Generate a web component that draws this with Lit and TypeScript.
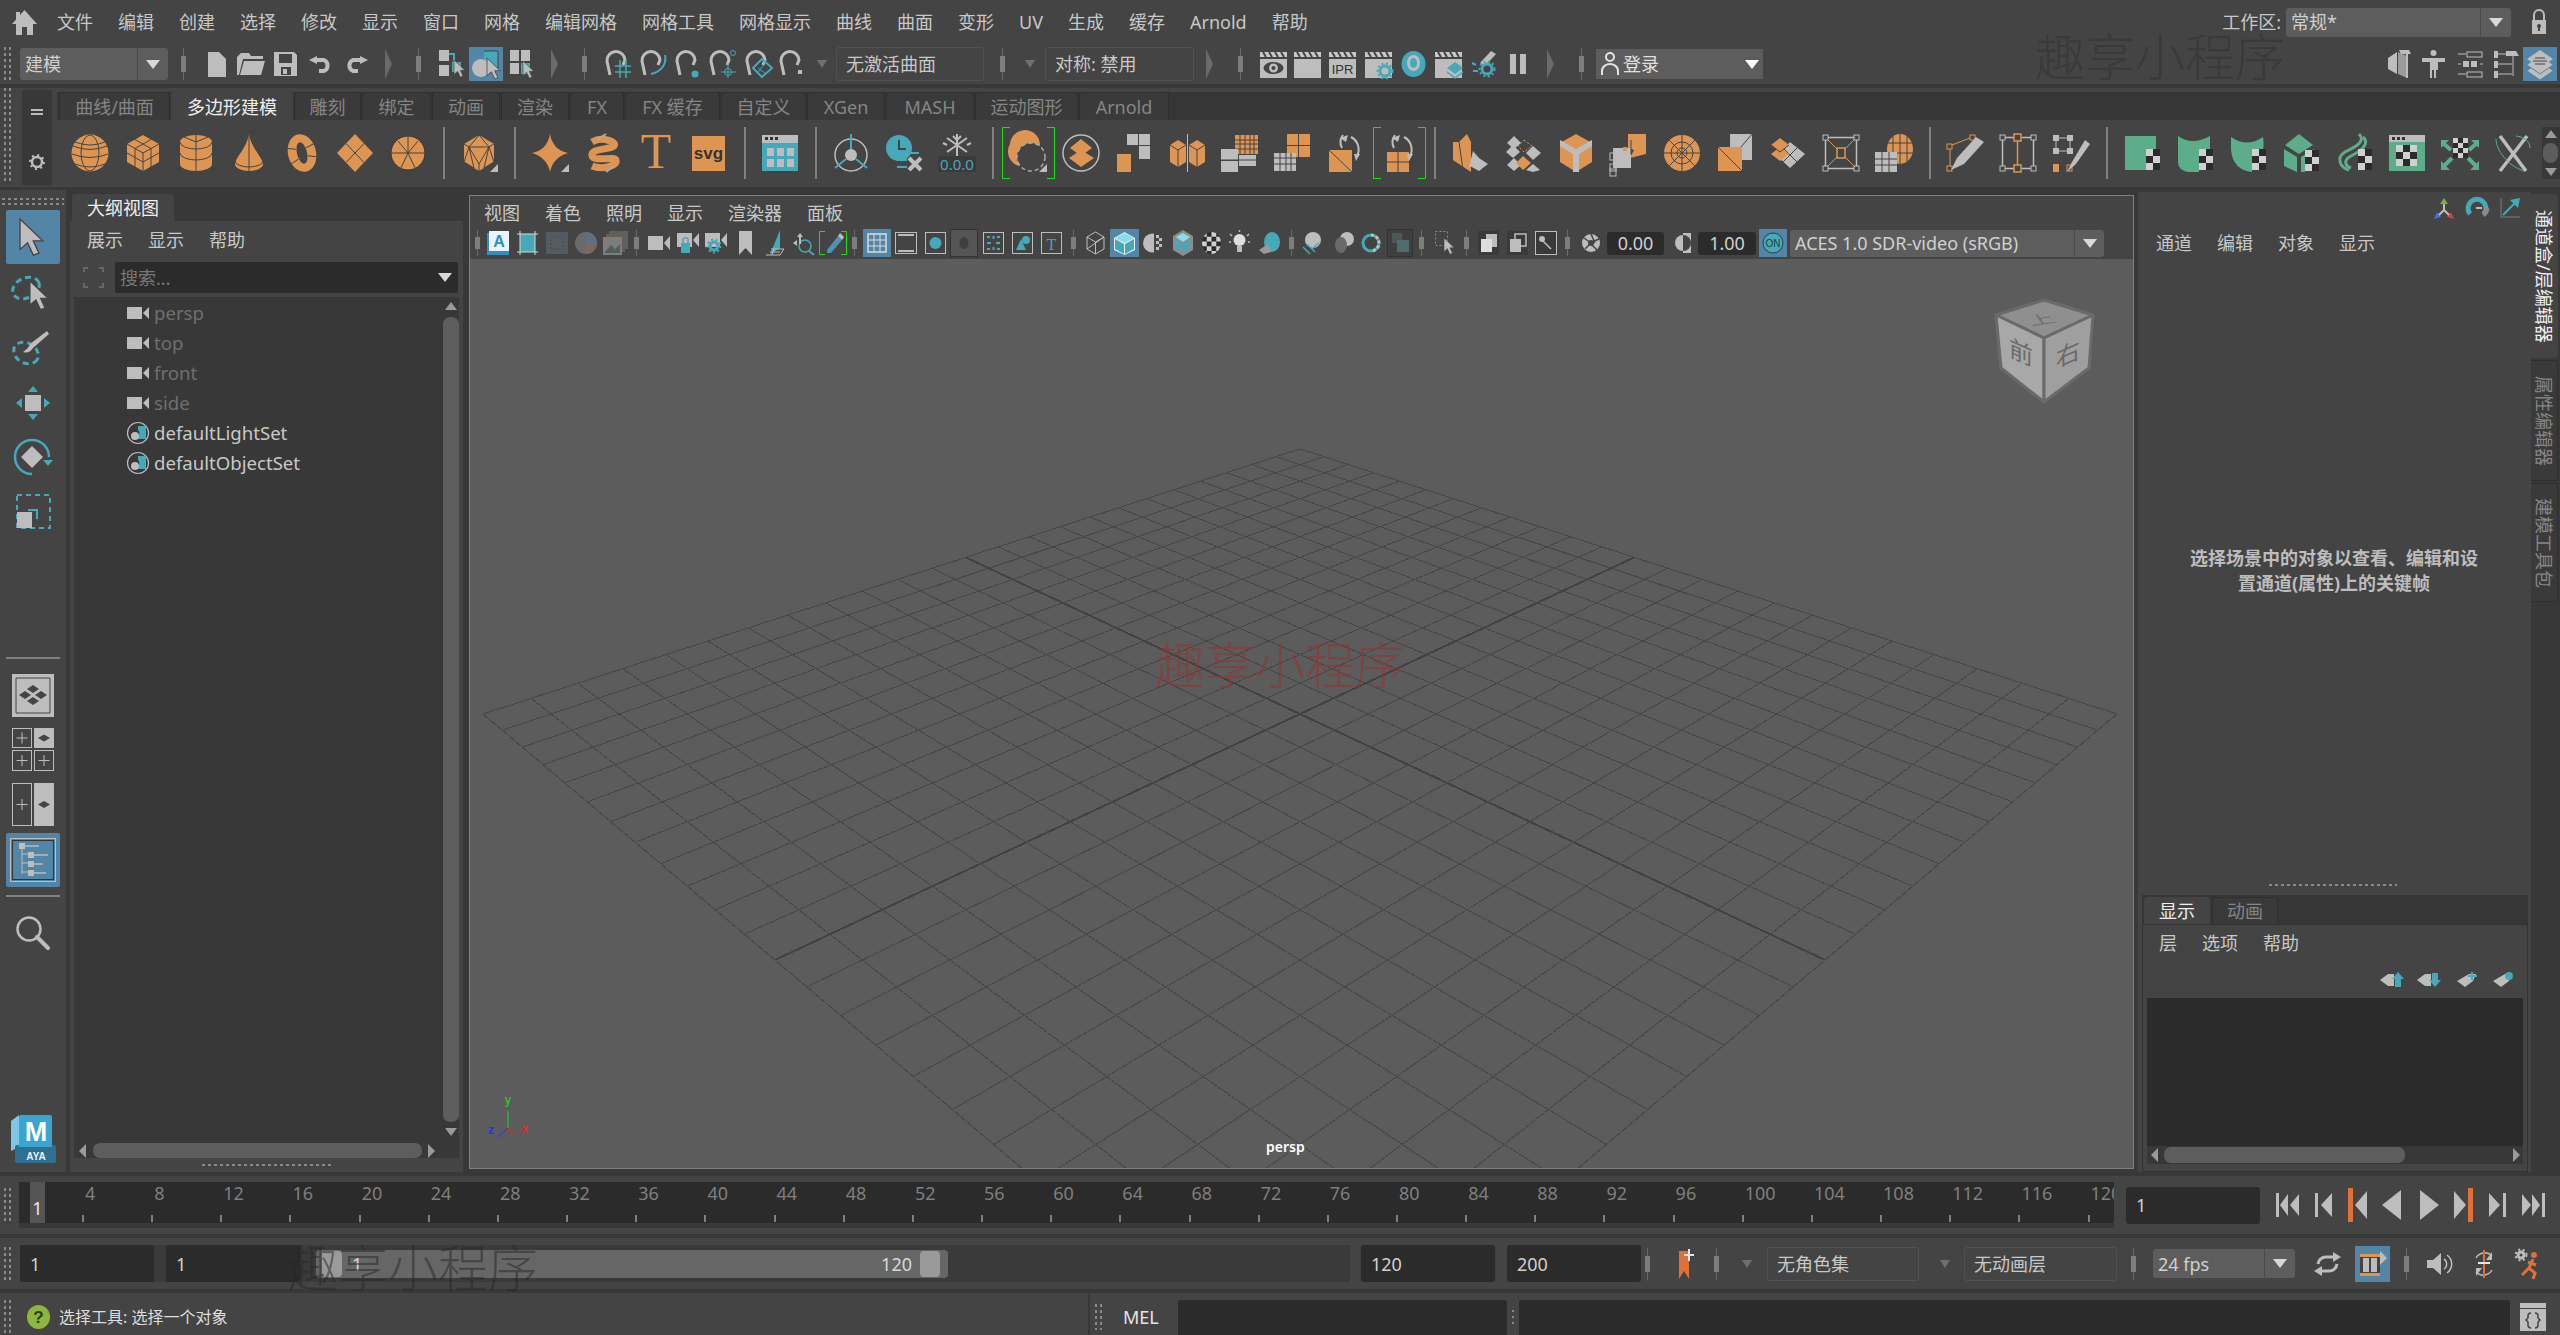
import { LitElement, css, html, svg } from "lit";
import { customElement } from "lit/decorators.js";

// palette sampled from the reference
const O = "#dd9553";
const G = "#bdbdbd";
const T = "#46a8b8";
const M = "#5dad8a";
const K = "#444444";
const B = "#5285a6";

type Item = { w: number; c: unknown };

const ic = (w: number, h: number, c: unknown): Item => ({
  w,
  c: html`<svg width=${w} height=${h} viewBox="0 0 ${w} ${h}">${c}</svg>`,
});
const ln = (d: string, col = K, sw = 1) => svg`<path d=${d} fill="none" stroke=${col} stroke-width=${sw}/>`;
const fl = (d: string, col = G) => svg`<path d=${d} fill=${col}/>`;
const rc = (x: number, y: number, w: number, h: number, col = G) =>
  svg`<rect x=${x} y=${y} width=${w} height=${h} fill=${col}/>`;
const cursor = (x: number, y: number, s = 1, col = G) =>
  svg`<path transform="translate(${x} ${y}) scale(${s})" d="M0 0V16L4 12.5L7 19L10 18L7 11.5H12Z" fill=${col} stroke=${K} stroke-width=".7"/>`;
const check = (x: number, y: number, c = 7, rows = 3, cols = 2) => {
  const out: unknown[] = [rc(x, y, c * cols, c * rows, "#2b2b2b")];
  for (let r = 0; r < rows; r++) for (let q = 0; q < cols; q++) if ((r + q) % 2 == 0) out.push(rc(x + q * c, y + r * c, c, c, "#d0d0d0"));
  return out;
};
const corner = svg`<path d="M30 38H38V30Z" fill=${G}/>`;
const box = (w: number, h: number, col = G, sw = 1) =>
  svg`<rect x=".5" y=".5" width=${w - 1} height=${h - 1} fill="none" stroke=${col} stroke-width=${sw}/>`;

function box2(x: number, y: number) {
  return svg`<rect x=${x} y=${y - 1} width="6" height="7" fill="none" stroke=${G}/>`;
}

// ---- shelf icons, 38x38
const shelf: Record<string, unknown> = {
  sphere: svg`<circle cx="19" cy="19" r="18.5" fill=${O}/><ellipse cx="19" cy="19" rx="9" ry="18" fill="none" stroke=${K}/>${ln("M2 12Q19 19 36 12M1 20Q19 27 37 20M4 30Q19 36 34 30M4 8Q19 14 34 8")}`,
  cube: svg`${fl("M19 1L35 10V28L19 37L3 28V10Z", O)}${ln("M3 10L19 19L35 10M19 19V37M11 5.5L27 14.5M27 5.5L11 14.5M11 14.5V33M27 14.5V33M3 19L19 28L35 19")}`,
  cyl: svg`${fl("M3 8A16 7 0 0 1 35 8V30A16 7 0 0 1 3 30Z", O)}${ln("M3 8A16 7 0 0 0 35 8M3 19A16 7 0 0 0 35 19M19 15V37M19 1V15M7 3L19 8L31 3")}`,
  cone: svg`${fl("M19 0C21 14 33 24 33 30A14 7 0 0 1 5 30C5 24 17 14 19 0Z", O)}${ln("M19 0V37M5 27A14 6 0 0 0 33 27")}`,
  torus: svg`<g transform="rotate(-14 19 19)"><ellipse cx="19" cy="19" rx="14" ry="19" fill=${O}/><ellipse cx="19" cy="19" rx="5" ry="11" fill=${K}/>${ln("M6 11L14 14M32 13L24 15M6 27L14 24M32 26L24 23")}</g>`,
  plane: svg`${fl("M19 0L37 19L19 38L1 19Z", O)}${ln("M10 9.5L28 28.5M28 9.5L10 28.5")}`,
  disc: svg`<circle cx="19" cy="19" r="17" fill=${O} stroke="#333"/>${ln("M2 19H36M19 2V19M9 7L19 19L29 7M19 19L12 34M19 19L26 34")}`,
  plat: svg`${fl("M19 1L34 10V28L19 37L4 28V10Z", O)}${ln("M19 1L9 13L29 13ZM4 10L9 13L4 28L14 34L9 13L19 30L29 13L24 34L34 28L29 13L34 10M19 30V37")}${corner}`,
  star: svg`${fl("M19 0C21 11 27 17 37 19C27 22 21 28 19 38C17 28 11 22 1 19C11 17 17 11 19 0Z", O)}${corner}`,
  helix: svg`${ln("M8 8C18 2 34 8 30 12C26 16 6 14 8 22C10 28 30 22 32 26C34 32 18 36 8 32", O, 7)}${ln("M22 0L14 5M30 32L22 38", "#aaa", 2)}`,
  T: svg`<text x="19" y="34" text-anchor="middle" font-size="50" font-family="Liberation Serif" fill=${O}>T</text>`,
  svg: svg`<rect x="2" y="2" width="33" height="35" fill=${O}/><text x="18.5" y="25" text-anchor="middle" font-size="17" font-weight="bold" font-family="Liberation Sans" fill="#333">svg</text>`,
  win: svg`${rc(1, 1, 36, 36, T)}${rc(1, 1, 36, 8, G)}${rc(4, 3, 3, 3, "#333")}${rc(9, 3, 3, 3, "#333")}${rc(14, 3, 3, 3, "#333")}${[6, 16, 26].map((x) => [rc(x, 14, 7, 8), rc(x, 25, 7, 8)])}`,
  loc: svg`<circle cx="19" cy="21" r="16" fill="none" stroke=${G} stroke-width="1.5"/><circle cx="19" cy="21" r="6" fill=${G}/>${ln("M19 0V15M14 25L3 34M24 25L35 34", T, 2)}`,
  clock: svg`<circle cx="14" cy="14" r="13" fill=${T}/>${ln("M14 6V15H21", K, 2)}${ln("M16 19H34M12 26H22M12 33H22", T, 2)}${ln("M24 24L36 36M36 24L24 36", G, 4)}`,
  snow: svg`${rc(0, 22, 38, 16, "#3a3a3a")}${ln("M19 0V22M9 4L29 18M29 4L9 18M15 2L19 6L23 2M5 9L9 11M33 9L29 11", G, 2)}<text x="19" y="36" text-anchor="middle" font-size="15" font-family="Noto Sans" fill=${T}>0.0.0</text>`,
  bool: svg`<path d="M1 10A15 15 0 1 1 28 20L10 32A15 15 0 0 1 1 10Z" fill=${O}/><circle cx="22" cy="23" r="14" fill=${K} stroke="#aaa" stroke-width="1.5" stroke-dasharray="4 3"/>${corner}`,
  combine: svg`<circle cx="19" cy="19" r="18" fill="none" stroke=${G} stroke-width="1.5"/>${fl("M19 5L30 14L19 22L8 14Z", O)}${fl("M19 16L32 24L19 33L7 24Z", O)}`,
  sepa: svg`${rc(12, 0, 11, 11)}${rc(24, 0, 11, 11)}${rc(24, 12, 11, 13)}${rc(2, 20, 14, 18, O)}`,
  mirror: svg`${fl("M10 6L18 11V28L10 33L2 28V11Z", O)}${ln("M2 11L10 16L18 11M10 16V33")}${fl("M29 6L37 11V28L29 33L21 28V11Z", O)}${ln("M21 11L29 16L37 11M29 16V33")}${ln("M19.5 0V38", G, 1)}`,
  smooth: svg`${rc(14, 1, 23, 19, O)}${ln("M14 6H37M14 10H37M14 15H37M19 1V20M24 1V20M29 1V20M33 1V20")}${rc(0, 15, 17, 11)}${rc(18, 21, 17, 11)}${rc(0, 27, 17, 11)}${ln("M0 26H35")}`,
  reduce: svg`${rc(13, 0, 23, 23, O)}${ln("M13 11.5H36M24.5 0V23")}${rc(0, 19, 22, 18)}${ln("M0 24H22M0 30H22M6 19V37M12 19V37M17 19V37")}`,
  tri: svg`${fl("M2 16H25V38H2Z", O)}${ln("M2 16L25 38")}${ln("M15 14A12 12 0 0 1 16 1M24 3A14 14 0 0 1 30 22", G, 2)}${fl("M13 4L21 1L19 8Z")}${fl("M27 20L33 20L29 27Z")}`,
  quad: svg`${rc(7, 18, 22, 20, O)}${ln("M7 28H29M18 18V38")}${ln("M14 14A12 12 0 0 1 15 1M24 3A14 14 0 0 1 30 22", G, 2)}${fl("M12 4L20 1L18 8Z")}${fl("M27 20L33 20L29 27Z")}`,
  ext: svg`${fl("M8 8L16 0L20 8V38L2 26V8Z", O)}${ln("M8 8L12 36")}${fl("M22 17L28 24L18 33Z M28 24L37 30L28 37L19 32Z")}`,
  mesh: svg`${fl("M10 2L17 9L10 15L3 9Z")}${fl("M2 18L9 11L16 18L9 24Z")}${fl("M29 12L37 19L29 26L22 19Z")}${fl("M10 24L17 31L10 37L3 31Z")}${fl("M29 30L36 36L29 38L22 36Z")}${fl("M19 22L27 29L19 36L12 29Z", O)}<path d="M20 6L28 12L20 18L14 12Z" fill="none" stroke=${O} stroke-dasharray="2 2"/>`,
  bevel: svg`${fl("M19 0L35 9V28L19 38L3 28V9Z", O)}${fl("M19 15L35 6V12L22 20V38H16V20L3 12V6Z")}`,
  bridge: svg`${fl("M18 0H36V20L20 24L24 16L18 14Z", O)}${rc(3, 14, 18, 20)}${ln("M21 6V20")}${rc(13, 13, 4, 4, O)}${[[0, 20], [0, 31], [0, 36]].map(([x, y]) => box2(x, y))}`,
  circ: svg`<circle cx="19" cy="19" r="18" fill=${O}/>${ln("M1 19H37M19 1V37M6 6L32 32M32 6L6 32")}<circle cx="19" cy="19" r="11" fill="none" stroke=${K}/><circle cx="19" cy="19" r="5" fill="none" stroke=${K}/>`,
  extr2: svg`${fl("M14 0H36V26H14Z")}${ln("M14 26L36 0", K)}${rc(2, 13, 24, 24, O)}${ln("M2 13L26 37")}`,
  wedge: svg`${fl("M21 8L36 20L21 34L8 22Z")}${ln("M14 28L28 14M14 14L28 28")}${fl("M11 4L20 11L11 18L2 11Z", O)}${fl("M11 13L20 20L11 27L2 20Z", O)}${ln("M2 11L11 18L20 11")}`,
  poke: svg`${[[1, 1], [32, 1], [1, 32], [32, 32]].map(([x, y]) => svg`<rect x=${x} y=${y} width="5" height="5" fill="none" stroke=${G}/>`)}${ln("M6 3.5H32M6 34.5H32M3.5 6V32M34.5 6V32", G, 1.5)}${ln("M6 6L15 15M32 6L23 15M6 32L15 23M32 32L23 23", O)}<rect x="15" y="14" width="8" height="10" fill="none" stroke=${O} stroke-width="1.5"/>`,
  wedg2: svg`<ellipse cx="25" cy="15" rx="13" ry="15" fill=${O}/>${ln("M12 9H38M12 19H38M25 0V30M18 2V28M32 2V28")}${rc(0, 18, 22, 20)}${ln("M0 25H22M0 31H22M7 18V38M14 18V38")}`,
  cut: svg`<rect x="1" y="32" width="5" height="5" fill="none" stroke=${O}/><rect x="1" y="10" width="5" height="5" fill="none" stroke=${O}/><rect x="24" y="1" width="5" height="5" fill="none" stroke=${O}/>${ln("M4 32V15M6 11L24 4", O)}${fl("M5 36L11 24L30 3L38 8L18 30Z")}`,
  loop: svg`${[1, 32].flatMap((x) => [1, 32].map((y) => svg`<rect x=${x} y=${y} width="5" height="5" fill="none" stroke=${G}/>`))}${ln("M3.5 6V32M34.5 6V32", G, 1.5)}${ln("M6 3.5H15M23 3.5H32M6 34.5H15M23 34.5H32", G, 1.5)}<rect x="15" y="0" width="7" height="7" fill="none" stroke=${O} stroke-width="1.5"/><rect x="15" y="31" width="7" height="7" fill="none" stroke=${O} stroke-width="1.5"/>${ln("M18.5 7V31", O, 1.5)}`,
  offs: svg`${rc(1, 1, 6, 6)}${rc(15, 1, 6, 6)}${rc(1, 14, 6, 6)}${rc(15, 14, 6, 6)}${ln("M7 4H15M7 17H15M4 7V14M18 7V14", G)}${rc(1, 30, 6, 8, O)}<rect x="15" y="31" width="5" height="6" fill="none" stroke=${O}/>${fl("M15 38L20 28L33 6L38 10L24 30Z")}`,
  uv1: svg`${rc(2, 2, 31, 34, M)}${check(23, 15)}`,
  uv2: svg`${fl("M2 2Q16 12 34 2V24H23V38H12Q2 36 2 28Z", M)}${check(23, 15)}`,
  uv3: svg`${fl("M2 3Q18 14 34 3Q36 14 32 20H23V38Q4 36 2 16Z", M)}${check(23, 15)}`,
  uv4: svg`${fl("M17 0L31 11L17 20L3 11Z", M)}${fl("M2 15L15 23V38L2 32Z", M)}${fl("M19 23L32 15V22H23V38H19Z", M)}${check(23, 16)}`,
  uv5: svg`${ln("M24 0C32 8 18 14 10 18C0 24 6 34 14 36", M, 3)}${ln("M28 3C36 10 24 18 16 22C8 26 10 32 16 34", M, 3)}${check(23, 15)}`,
  uv6: svg`${rc(1, 1, 36, 36, M)}${rc(1, 1, 36, 7, G)}${rc(4, 3, 3, 3, "#333")}${rc(9, 3, 3, 3, "#333")}${rc(14, 3, 3, 3, "#333")}${check(8, 11, 7, 3, 3)}`,
  uv7: svg`${check(12, 4, 5, 4, 3)}${ln("M10 16L3 10M28 16L35 10M11 24L3 32M27 24L35 32", M, 4)}${fl("M0 6H8L0 14Z M38 6H30L38 14Z M0 36V27L9 36Z M38 36V27L29 36Z", M)}`,
  uv8: svg`${ln("M6 2L32 37", G, 3.5)}${ln("M33 2L6 37", G, 3.5)}${ln("M2 5C2 16 14 32 30 37M22 2C30 3 36 7 36 14", M)}`,
};

// "|" is a separator between groups, "[" marks an icon with the green bracket
const SHELF: string[] = [
  "sphere", "cube", "cyl", "cone", "torus", "plane", "disc", "|", "plat", "|", "star", "helix", "T", "svg", "|", "win", "|",
  "loc", "clock", "snow", "|", "[bool", "combine", "sepa", "mirror", "smooth", "reduce", "tri", "[quad", "|",
  "ext", "mesh", "bevel", "bridge", "circ", "extr2", "wedge", "poke", "wedg2", "|", "cut", "loop", "offs", "|",
  "uv1", "uv2", "uv3", "uv4", "uv5", "uv6", "uv7", "uv8",
];

// ---- small toolbar icons, real pixel sizes
const handle = ic(5, 32, svg`${rc(2, 0, 1, 32, "#6a6a6a")}${rc(0, 8, 5, 16, "#7d7d7d")}`);
const handleS = ic(5, 26, svg`${rc(2, 0, 1, 26, "#6a6a6a")}${rc(0, 7, 5, 12, "#7d7d7d")}`);
const collapse = ic(7, 30, svg`${fl("M0 0L7 15L0 30Z", "#6a6a6a")}`);
const tinyTri = ic(10, 8, svg`${fl("M0 0H10L5 8Z", "#6f6f6f")}`);

const mag = (extra: unknown) =>
  ic(28, 28, svg`${ln("M5 25L2 11A9 9 0 0 1 20 10L18 15", G, 3)}${extra}`);

const clap = (extra: unknown) =>
  ic(27, 27, svg`${rc(0, 8, 27, 19)}${rc(0, 1, 27, 5, "#c8c8c8")}${ln("M3 1L6 6M9 1L12 6M15 1L18 6M21 1L24 6", K, 2)}${extra}`);
const gear = (x: number, y: number, r = 5, col = T) =>
  svg`<circle cx=${x} cy=${y} r=${r} fill="none" stroke=${col} stroke-width="3"/><circle cx=${x} cy=${y} r=${r + 2.5} fill="none" stroke=${col} stroke-width="2" stroke-dasharray="2 2.5"/>`;

const mini: Record<string, Item> = {
  new: ic(18, 25, fl("M0 0H11L18 7V25H0Z")),
  open: ic(28, 22, svg`${fl("M4 0H12L14 3H26V6H6L2 22H0V4Z")}${fl("M7 8H28L24 22H3Z")}`),
  save: ic(23, 24, svg`${fl("M0 0H20L23 3V24H0Z")}${rc(5, 2, 13, 9, K)}${rc(7, 15, 10, 8, K)}${rc(9, 17, 4, 5)}`),
  undo: ic(24, 16, svg`${ln("M5 4H15A6 6 0 0 1 15 15H10", G, 4)}${fl("M8 0V8L0 4Z")}`),
  redo: ic(24, 16, svg`${ln("M19 4H9A6 6 0 0 0 9 15H14", G, 4)}${fl("M16 0V8L24 4Z")}`),
  m1: ic(27, 28, svg`${rc(0, 0, 10, 11)}${rc(0, 15, 10, 11)}${ln("M10 4H15V13", T, 2)}${rc(13, 12, 9, 10, T)}${cursor(15, 10, 0.9)}`),
  m2: ic(34, 34, svg`${rc(0, 0, 34, 34, B)}${rc(15, 4, 14, 16, T)}${ln("M15 4H29V22", K)}<circle cx="12" cy="21" r="9" fill=${G}/>${cursor(18, 11, 1.1)}`),
  m3: ic(24, 28, svg`${rc(0, 0, 9, 11)}${rc(11, 0, 9, 11)}${rc(0, 13, 9, 11)}${rc(11, 13, 9, 11, T)}${cursor(13, 11, 0.9)}`),
  s1: mag(ln("M10 16H26M10 22H26M15 10V28M21 10V28", T, 1.5)),
  s2: mag(ln("M25 5C27 14 21 22 11 24", T, 2)),
  s3: mag(svg`<circle cx="20" cy="24" r="3.5" fill=${T}/>`),
  s4: mag(svg`<circle cx="24" cy="3" r="2.5" fill="none" stroke=${T}/><circle cx="19" cy="22" r="3.5" fill="none" stroke=${T}/>${ln("M19 13V28M12 22H27", T)}`),
  s5: mag(svg`<path d="M17 9L27 18L17 27L8 18Z" fill="none" stroke=${T} stroke-width="2"/>${ln("M13 18L21 24M21 12L13 22", T)}`),
  s6: mag(rc(19, 20, 4, 4)),
  c1: clap(svg`<ellipse cx="13.5" cy="17" rx="10" ry="6" fill=${K}/><circle cx="13.5" cy="17" r="4.5" fill=${G}/><circle cx="13.5" cy="17" r="2" fill=${K}/>`),
  c2: clap(""),
  c3: clap(svg`<text x="13.5" y="23" text-anchor="middle" font-size="13" font-family="Liberation Sans" fill="#333">IPR</text>`),
  c4: clap(gear(20, 20)),
  c5: clap(svg`${fl("M20 11L28 17L20 23L12 17Z", T)}${fl("M12 20L20 26L28 20V22L20 28L12 22Z", T)}`),
  ring: ic(25, 26, svg`<ellipse cx="12.5" cy="13" rx="12" ry="13" fill=${T}/><ellipse cx="12.5" cy="12" rx="6.5" ry="8" fill=${G}/><ellipse cx="12.5" cy="12" rx="3.5" ry="5" fill=${T}/>`),
  rs: ic(26, 27, svg`${fl("M9 12L20 0L25 3L14 15Z")}${ln("M1 12L5 14M2 20H7", T, 2)}${gear(16, 18, 5)}`),
  pause: ic(16, 20, svg`${rc(0, 0, 6, 20)}${rc(10, 0, 6, 20)}`),
  r1: ic(24, 28, svg`${fl("M1 8L10 2V24L1 19Z")}${fl("M11 2L20 6V28L11 24Z", "#9a9a9a")}${fl("M12 0H22L24 4H14Z")}${rc(19, 4, 2, 24)}`),
  r2: ic(23, 28, svg`<circle cx="11.5" cy="3" r="3" fill=${G}/>${fl("M0 8H23V12H16V20H14V28H12V20H10V28H8V12H0Z")}`),
  r3: ic(25, 26, svg`${ln("M0 3H8M0 13H3M0 23H8M22 13H25", G)}<rect x="9" y="1" width="15" height="5" fill="none" stroke=${G}/><rect x="9" y="21" width="15" height="5" fill="none" stroke=${G}/>${rc(5, 10, 6, 6)}${rc(13, 10, 6, 6)}`),
  r4: ic(25, 26, svg`${rc(0, 0, 4, 7)}${rc(0, 10, 4, 7)}${rc(0, 20, 4, 7)}${ln("M4 3H18M4 13H18M4 23H18M19 5V25", G)}${fl("M12 0H22L25 5H12Z")}`),
  r5: ic(34, 34, svg`${rc(0, 0, 34, 34, B)}${[21, 15, 9].map((y) => fl(`M17 ${y - 6}L30 ${y + 3}L17 ${y + 12}L4 ${y + 3}Z`))}${[21, 15].map((y) => ln(`M4 ${y + 3}L17 ${y + 12}L30 ${y + 3}`, B))}${ln("M12 11H22M10 14H24M12 17H22", K)}`),
  person: ic(18, 24, svg`<circle cx="9" cy="5" r="4" fill="none" stroke="#e4e4e4" stroke-width="2"/>${ln("M1 23V19C1 14 6 12 9 12C12 12 17 14 17 19V23", "#e4e4e4", 2)}`),

  pA: ic(23, 24, svg`${rc(0, 2, 22, 22, "#2f8fc1")}${rc(2, 0, 20, 20, "#eaf4fa")}<text x="12" y="16" text-anchor="middle" font-size="16" font-weight="bold" font-family="Liberation Sans" fill="#2f8fc1">A</text>`),
  pB: ic(21, 24, svg`${rc(3, 3, 15, 18, T)}${ln("M0 3H21M0 21H21M3 0V24M18 0V24", "#d8d8d8")}`),
  pC: ic(22, 22, svg`${rc(0, 0, 22, 22, "#555b63")}<rect x="5" y="5" width="12" height="12" fill="none" stroke="#4a4f55" stroke-dasharray="2 2"/>`),
  pD: ic(22, 22, svg`<circle cx="11" cy="11" r="11" fill="#6a6a6a"/><path d="M11 0A11 11 0 0 1 22 11H11Z" fill="#5d7080"/><path d="M11 11H22A11 11 0 0 1 11 22Z" fill="#7a6868"/>`),
  pE: ic(25, 24, svg`${rc(6, 0, 19, 18, "#4d6a5a")}${rc(3, 3, 19, 18, "#6a5a5a")}${rc(0, 6, 19, 18, "#7d7d7d")}${fl("M2 21L8 14L12 18L17 13V22H2Z", "#4f5f5f")}`),
  cam: ic(22, 14, svg`${rc(0, 0, 15, 14)}${fl("M22 0V14L16 7Z")}`),
  lockcam: ic(22, 24, svg`${rc(0, 2, 15, 14)}${fl("M22 2V16L16 9Z")}${rc(4, 12, 9, 10, T)}${ln("M6 12V8A3 3 0 0 1 11 8V12", T, 1.5)}`),
  gearcam: ic(22, 24, svg`${rc(0, 2, 15, 14)}${fl("M22 2V16L16 9Z")}${gear(9, 15, 4)}`),
  mark: ic(13, 24, fl("M0 0H13V24L6.5 17L0 24Z")),
  plane2: ic(20, 26, svg`${fl("M10 10L14 0V18L4 24Z", T)}${ln("M0 25H14L18 19H5", G)}${ln("M4 22H14M8 19L6 25", G)}`),
  focus: ic(21, 24, svg`<circle cx="12" cy="15" r="6" fill="none" stroke=${T} stroke-width="1.5"/>${ln("M16 20L21 24", T, 2)}${fl("M7 2L4 6H6V13H8V6H10Z")}${fl("M0 12L4 9V15Z")}`),
  pen: ic(28, 24, svg`${ln("M6 .5H.5V23.5H6M22 .5H27.5V23.5H22", "#18e018")}${fl("M8 19L19 5L23 9L12 22L8 22Z", "#4f93b0")}${fl("M19 5L21 2L25 6L23 9Z", G)}`),
  grid1: ic(28, 28, svg`${rc(0, 0, 28, 28, B)}<rect x="5" y="5" width="18" height="18" fill="none" stroke="#ddd" stroke-width="1.5"/>${ln("M5 11H23M5 17H23M11 5V23M17 5V23", "#ddd")}`),
  film: ic(22, 22, svg`${box(22, 22, G, 1)}${rc(3, 4, 16, 14, K)}${ln("M3 3H19M3 19H19", G, 2)}`),
  res: ic(21, 22, svg`${box(21, 22, G)}<circle cx="10.5" cy="11" r="6" fill=${T}/>`),
  dk: ic(28, 28, svg`${rc(0, 0, 28, 28, "#555")}${box(28, 28, "#333")}<ellipse cx="14" cy="14" rx="4.5" ry="6" fill="#3f3f3f"/>`),
  safe: ic(21, 22, svg`${box(21, 22, G)}${ln("M4 11H8M13 11H17M10.5 4V7M10.5 15V18", T, 2)}${ln("M4 5H7M14 5H17M4 17H7M14 17H17", T, 2)}`),
  gate: ic(21, 22, svg`${box(21, 22, G)}${fl("M4 18L9 7L14 18Z", T)}<circle cx="14" cy="8" r="4" fill=${T}/>`),
  txt: ic(21, 22, svg`${box(21, 22, G)}<text x="10.5" y="18" text-anchor="middle" font-size="16" font-family="Liberation Serif" fill=${T}>T</text>`),
  wire: ic(19, 24, svg`${ln("M9.5 1L18 6V18L9.5 23L1 18V6ZM1 6L9.5 11L18 6M9.5 11V23M1 18L18 6", G)}`),
  shaded: ic(29, 28, svg`${rc(0, 0, 29, 28, B)}${fl("M14.5 3L25 9V21L14.5 26L4 21V9Z", "#eee")}${fl("M14.5 4L24 9L14.5 14L5 9Z", "#8adce8")}${fl("M5 10L14 15V25L5 20Z", T)}${fl("M24 10L15 15V25L24 20Z", T)}`),
  half: ic(19, 22, svg`<circle cx="9.5" cy="11" r="9.5" fill=${G}/><path d="M11 1A10 10 0 0 1 11 21Z" fill=${K}/>${[3, 9, 15].map((y) => rc(13, y, 3, 3))}${[6, 12].map((y) => rc(16, y, 3, 3))}`),
  hexa: ic(20, 26, svg`${fl("M10 0L20 6V20L10 26L0 20V6Z", "#8d8d8d")}${fl("M10 3L17 7L10 12L3 7Z", "#8adce8")}${fl("M3 9L9 13V22L3 19Z", T)}${fl("M17 9L11 13V22L17 19Z", T)}`),
  checkb: ic(19, 22, svg`<clipPath id="cc"><ellipse cx="9.5" cy="11" rx="9.5" ry="11"/></clipPath><g clip-path="url(#cc)">${check(0, 0, 4.75, 5, 4)}</g>`),
  bulb: ic(21, 26, svg`<circle cx="10.5" cy="10" r="6" fill="#dedede"/>${rc(8, 16, 5, 6)}${ln("M10.5 0V2M1 4L3 6M20 4L18 6M0 12H2M19 12H21", G, 1.5)}`),
  shad: ic(21, 22, svg`<ellipse cx="13" cy="10" rx="8" ry="10" fill=${T}/>${fl("M0 18L9 12L12 20L5 22Z", "#999")}`),
  ao: ic(20, 24, svg`<circle cx="11" cy="9" r="8" fill=${G}/>${ln("M1 16L8 23M5 13L13 21M10 18L17 12", T, 1.5)}`),
  ghost: ic(20, 24, svg`<circle cx="13" cy="8" r="7" fill=${G}/><ellipse cx="7" cy="14" rx="6" ry="8" fill="#6a6a6a"/>`),
  circT: ic(18, 22, svg`<circle cx="9" cy="11" r="8" fill="none" stroke=${T} stroke-width="3"/><path d="M9 3A8 8 0 0 1 9 19" fill="none" stroke=${G} stroke-width="3" stroke-dasharray="3 2"/>`),
  dk2: ic(26, 28, svg`${rc(0, 0, 26, 28, "#3f3f3f")}${box(26, 28, "#333")}${rc(5, 4, 10, 10, "#4c5757")}${rc(10, 11, 12, 12, "#4f6a70")}`),
  sel: ic(20, 24, svg`<rect x=".5" y=".5" width="12" height="14" fill="none" stroke=${T} stroke-dasharray="2 2"/>${cursor(9, 7, 0.85)}`),
  xr1: ic(21, 24, svg`${rc(0, 0, 21, 24, "#3a3a3a")}${rc(8, 3, 11, 13)}${rc(3, 8, 11, 13, "#dedede")}`),
  xr2: ic(21, 24, svg`${rc(0, 0, 21, 24, "#3a3a3a")}<rect x="8" y="3" width="11" height="12" fill="none" stroke=${G} stroke-width="1.5"/>${rc(3, 8, 11, 13)}`),
  xr3: ic(22, 24, svg`${rc(0, 0, 22, 24, "#3a3a3a")}${box(22, 24, G)}${ln("M6 8L16 18", G, 1.5)}<circle cx="7" cy="8" r="3" fill=${G}/>`),
  apert: ic(18, 22, svg`<circle cx="9" cy="11" r="9" fill=${G}/>${ln("M9 2L13 11M17 7L8 11M15 18L8 11M3 17L9 11M2 6L9 11", K, 1.5)}<circle cx="9" cy="11" r="3" fill=${K}/>`),
  cont: ic(17, 22, svg`${rc(9, 1, 8, 20)}<path d="M9 3A8 8 0 0 0 9 19Z" fill=${G}/><path d="M9 3A8 8 0 0 1 9 19Z" fill=${K}/>`),
  on: ic(28, 28, svg`${rc(0, 0, 28, 28, B)}<circle cx="14" cy="14" r="10" fill=${T} stroke="#2f3f48"/><text x="14" y="18" text-anchor="middle" font-size="10" font-family="Liberation Sans" fill="#2b3a40">ON</text>`),

  kUp: ic(23, 16, svg`${fl("M0 8L8 2H14L14 14H8Z")}${fl("M18 0L24 7H21V15H15V7H12Z", T)}`),
  kDn: ic(23, 16, svg`${fl("M0 8L8 2H14L14 14H8Z")}${fl("M18 15L24 8H21V1H15V8H12Z", T)}`),
  kAdd: ic(20, 16, svg`${fl("M0 9L12 2H19L16 9L8 15Z")}${ln("M15 0V8M11 4H20", T, 2)}`),
  kDot: ic(20, 16, svg`${fl("M0 9L12 2H19L16 9L8 15Z")}<circle cx="16" cy="4" r="4" fill=${T}/>`),
  axes: ic(20, 21, svg`${fl("M10 0L14 6H6Z", "#7fae3e")}${fl("M0 21L3 14L7 19Z", "#3f6fe0")}${fl("M20 21L13 19L17 14Z", "#d8403f")}${ln("M10 6V12M10 12L5 17M10 12L15 17", G, 2)}`),
  spin: ic(22, 21, svg`<path d="M4 16A9 9 0 1 1 18 16" fill="none" stroke=${T} stroke-width="5"/><path d="M17 17A9 9 0 0 0 21 10" fill="none" stroke="#8a8a8a" stroke-width="5"/>${rc(10, 9, 6, 2)}`),
  arrow2: ic(20, 20, svg`${ln("M1 0V19H20", "#6a6a6a", 1.5)}${ln("M3 17L17 3", T, 2)}${fl("M20 0L10 2L18 10Z", T)}`),
  bookmark: ic(24, 30, svg`${fl("M3 2H13V30L8 22L3 30Z", "#e0703a")}${ln("M13 0V12M8 6H18", "#e6e6e6", 2)}`),
  loopI: ic(27, 24, svg`${ln("M4 12A8 8 0 0 1 12 5H20", G, 3)}${fl("M19 0L27 5L19 10Z")}${ln("M23 12A8 8 0 0 1 15 19H7", G, 3)}${fl("M8 14L0 19L8 24Z")}`),
  filmOn: ic(35, 36, svg`${rc(0, 0, 35, 36, B)}${rc(5, 8, 20, 22, K)}${rc(8, 12, 6, 14)}${rc(16, 12, 6, 14)}${rc(5, 8, 20, 3, O)}${rc(5, 27, 20, 3, O)}${fl("M25 5L32 12L25 19Z")}`),
  speak: ic(28, 26, svg`${fl("M0 9H6L14 2V24L6 17H0Z")}${ln("M17 8A6 6 0 0 1 17 18M20 4A11 11 0 0 1 20 22", G, 1.5)}`),
  cache: ic(24, 32, svg`${ln("M4 10A10 10 0 0 1 20 8M4 24A10 10 0 0 0 20 22", G, 1.5)}${fl("M20 4V12H14Z")}${fl("M4 28V20H10Z")}${rc(11, 2, 2, 28, "#e0703a")}${rc(6, 14, 12, 2, "#e6e6e6")}`),
  run: ic(30, 32, svg`${gear(7, 7, 3, G)}<circle cx="20" cy="7" r="3" fill="#e0703a"/>${ln("M19 11L15 20L21 25L19 31M15 20L8 27M14 14L22 17", "#e0703a", 3)}`),
  pStart: ic(24, 24, svg`${rc(0, 0, 3, 24)}${fl("M12 1V23L4 12Z")}${fl("M23 1V23L14 12Z")}`),
  pPrev: ic(18, 24, svg`${rc(0, 0, 3, 24)}${fl("M17 0V24L6 12Z")}`),
  pKeyB: ic(20, 34, svg`${rc(0, 0, 5, 34, "#e0703a")}${fl("M19 3V31L7 17Z")}`),
  pBack: ic(19, 30, fl("M19 0V30L0 15Z")),
  pPlay: ic(19, 30, fl("M0 0V30L19 15Z")),
  pKeyF: ic(20, 34, svg`${rc(15, 0, 5, 34, "#e0703a")}${fl("M1 3V31L13 17Z")}`),
  pNext: ic(18, 24, svg`${rc(15, 0, 3, 24)}${fl("M1 0V24L12 12Z")}`),
  pEnd: ic(24, 24, svg`${rc(21, 0, 3, 24)}${fl("M1 1V23L10 12Z")}${fl("M11 1V23L19 12Z")}`),
};

// tools in the left column
const tools = {
  select: svg`${cursor(9, 4, 1.9)}`,
  lasso: svg`<ellipse cx="15" cy="17" rx="14" ry="10" transform="rotate(-25 15 17)" fill="none" stroke=${T} stroke-width="3" stroke-dasharray="6 4"/>${cursor(19, 10, 1.5)}`,
  paint: svg`<ellipse cx="15" cy="27" rx="13" ry="10" transform="rotate(30 15 27)" fill="none" stroke=${T} stroke-width="3" stroke-dasharray="6 4"/>${fl("M36 5L38 8L22 22Q18 28 12 26Q18 22 19 18Z")}`,
  move: svg`${rc(14, 14, 16, 16)}${fl("M22 5L27 11H17Z", T)}${fl("M22 39L27 33H17Z", T)}${fl("M5 22L11 17V27Z", T)}${fl("M39 22L33 17V27Z", T)}`,
  rotate: svg`<path d="M38 21A17 17 0 1 0 21 38" fill="none" stroke=${T} stroke-width="2.5"/>${fl("M21 10L32 21L21 32L10 21Z")}${fl("M32 24H42L37 30Z", T)}`,
  scale: svg`<rect x="6" y="4" width="33" height="33" fill="none" stroke=${T} stroke-width="2" stroke-dasharray="5 4"/>${rc(6, 21, 15, 16)}${ln("M17 19H26V28", T, 2)}`,
};

type StripItem = [string | Item, number];

// items sit in flow; the measured left edges become margins
const strip = (x0: number, items: StripItem[]) => {
  let at = x0;
  return items.map(([it, x]) => {
    const item = typeof it == "string" ? mini[it] : it;
    const gap = x - at;
    at = x + item.w;
    return html`<span class="it" style="margin-left:${gap}px">${item.c}</span>`;
  });
};
const arrow = html`<i class="arr"></i>`;
const dd = (w: number, h: number, text: string, div = 30) => ({
  w,
  c: html`<span class="dd" style="width:${w}px;height:${h}px"><span class="dd-t">${text}</span><span class="dd-a" style="width:${div}px">${arrow}</span></span>`,
});
const fieldBox = (w: number, text: string) => ({
  w,
  c: html`<span class="fb" style="width:${w}px">${text}</span>`,
});
const inp = (w: number, text: string, cls = "inp") => ({
  w,
  c: html`<span class=${cls} style="width:${w}px">${text}</span>`,
});
const grip = { w: 7, c: html`<span class="grip"></span>` };
const gripS = { w: 7, c: html`<span class="grip short"></span>` };

const MENUS = ["文件", "编辑", "创建", "选择", "修改", "显示", "窗口", "网格", "编辑网格", "网格工具", "网格显示", "曲线", "曲面", "变形", "UV", "生成", "缓存", "Arnold", "帮助"];
const TABS: [string, number][] = [
  ["曲线/曲面", 111], ["多边形建模", 122], ["雕刻", 67], ["绑定", 69], ["动画", 68], ["渲染", 68], ["FX", 54], ["FX 缓存", 95],
  ["自定义", 85], ["XGen", 78], ["MASH", 88], ["运动图形", 103], ["Arnold", 90],
];
const LIST: [string, boolean][] = [["persp", true], ["top", true], ["front", true], ["side", true], ["defaultLightSet", false], ["defaultObjectSet", false]];

// perspective of the ground grid, fitted to its corners in page coordinates
const project = (u: number, v: number) => {
  const d = u + v;
  const k = 1 - 0.222 * d;
  return [1300 + (408.5 * (u - v)) / k, 714 + (191.4 * d) / k];
};
const GRID: { p: number[]; axis: boolean }[] = [];
for (let i = -12; i <= 12; i++) {
  const t = i / 12;
  GRID.push({ p: [...project(t, -1), ...project(t, 1)], axis: i == 0 });
  GRID.push({ p: [...project(-1, t), ...project(1, t)], axis: i == 0 });
}
const TICKS = Array.from({ length: 30 }, (_, i) => (i + 1) * 4);

@customElement("app-root")
export class AppRoot extends LitElement {
  static styles = css`
    :host {
      display: block;
      position: relative;
      width: 2560px;
      height: 1335px;
      overflow: hidden;
      background: #383838;
      color: #c8c8c8;
      font-family: "Noto Sans", "Noto Sans CJK SC", sans-serif;
      font-size: 18px;
      line-height: 1;
    }
    svg { display: block; flex: none; overflow: visible; }
    .it { display: block; flex: none; }
    .bar { display: flex; align-items: center; background: #444; }
    .menu { height: 44px; }
    .menus { display: flex; gap: 25px; margin-left: 20px; white-space: nowrap; }
    .home { margin-left: 12px; }
    .ws { display: flex; align-items: center; margin-left: auto; padding-right: 14px; }
    .ws-l { margin-right: 5px; }
    .lock { margin-left: 21px; }
    .status { height: 40px; margin-bottom: 4px; }
    .grip {
      display: block;
      width: 7px;
      height: 34px;
      background:
        linear-gradient(#8a8a8a 50%, transparent 50%) 0 0 / 2px 6px repeat-y,
        linear-gradient(#8a8a8a 50%, transparent 50%) 5px 0 / 2px 6px repeat-y;
    }
    .grip.tall { height: 95px; margin: 0 0 0 4px; flex: none; }
    .grip.short { height: 26px; }
    .dd {
      display: flex;
      align-items: stretch;
      background: #5d5d5d;
      border-radius: 3px;
      color: #d0d0d0;
      white-space: nowrap;
    }
    .dd-t { flex: 1; display: flex; align-items: center; padding-left: 5px; }
    .dd-a { display: flex; align-items: center; justify-content: center; border-left: 1px solid #4a4a4a; }
    .arr { display: block; width: 0; height: 0; border: 7px solid transparent; border-top: 9px solid #d8d8d8; border-bottom: 0; }
    .fb {
      display: flex;
      align-items: center;
      box-sizing: border-box;
      height: 34px;
      padding-left: 9px;
      border: 1px solid #515151;
      border-radius: 3px;
      white-space: nowrap;
    }
    .login {
      display: flex;
      align-items: center;
      box-sizing: border-box;
      height: 30px;
      padding-left: 5px;
      gap: 4px;
      background: #5d5d5d;
      color: #e0e0e0;
    }
    .login .arr { margin-left: auto; margin-right: 4px; border-top-color: #fff; }

    .shelf { display: flex; height: 99px; margin-bottom: 3px; background: #444; }
    .shelf-side {
      flex: none;
      width: 30px;
      margin: 2px 0 2px 11px;
      background: #383838;
      display: flex;
      flex-direction: column;
      align-items: center;
      gap: 39px;
      padding: 19px 0 0;
      box-sizing: border-box;
    }
    .shelf-main { flex: 1; margin-left: 5px; min-width: 0; }
    .tabs { display: flex; height: 28px; margin-top: 4px; background: #363636; padding-left: 2px; gap: 1px; }
    .tab {
      box-sizing: border-box;
      display: flex;
      align-items: center;
      justify-content: center;
      flex: none;
      color: #858585;
      background: #3a3a3a;
      border: 1px solid #2f2f2f;
      border-bottom: 0;
      border-radius: 3px 3px 0 0;
      white-space: nowrap;
    }
    .tab.on { color: #efefef; background: #444; border-color: #444; }
    .icons { display: flex; align-items: center; height: 65px; margin-left: 6.5px; }
    .slot { flex: none; width: 53px; display: flex; align-items: center; justify-content: center; position: relative; }
    .sep { flex: none; width: 2px; height: 52px; margin: 0 8px; background: #808080; }
    .brk { position: absolute; left: 0; top: -7px; }
    .scroller { flex: none; display: flex; flex-direction: column; align-items: center; justify-content: space-between; width: 18px; height: 52px; margin-left: 2px; background: #383838; padding: 3px 0; box-sizing: border-box; }
    .up { width: 0; height: 0; border: 6px solid transparent; border-bottom: 8px solid #9a9a9a; border-top: 0; }
    .dn { width: 0; height: 0; border: 6px solid transparent; border-top: 8px solid #9a9a9a; border-bottom: 0; }
    .le { width: 0; height: 0; border: 7px solid transparent; border-right: 7px solid #9a9a9a; border-left: 0; }
    .ri { width: 0; height: 0; border: 7px solid transparent; border-left: 7px solid #9a9a9a; border-right: 0; }
    .knob { width: 15px; height: 20px; border-radius: 8px; background: #5d5d5d; }

    .main { display: flex; height: 982px; margin-bottom: 4px; }
    .toolbox { flex: none; width: 66px; margin-right: 4px; background: #444; display: flex; flex-direction: column; align-items: center; }
    .hgrip {
      height: 2px;
      background: linear-gradient(90deg, #8a8a8a 50%, transparent 50%) 0 0 / 6px 2px repeat-x;
    }
    .tb-grip { align-self: stretch; margin: 8px 2px 2px; height: 7px;
      background:
        linear-gradient(90deg, #8a8a8a 50%, transparent 50%) 0 0 / 6px 2px repeat-x,
        linear-gradient(90deg, #8a8a8a 50%, transparent 50%) 0 5px / 6px 2px repeat-x; }
    .tool { flex: none; width: 54px; height: 55px; display: flex; align-items: center; justify-content: center; }
    .tool.on { background: #5285a6; height: 54px; border-radius: 2px; margin: 3px 0 1px; }
    .tb-line { flex: none; width: 54px; height: 2px; background: #808080; }
    .tb-a { margin-top: 117px; }
    .lay { margin-top: 15px; }
    .lay2 { margin-top: 11px; }
    .lay3 { margin-top: 12px; }
    .lay-on { flex: none; width: 54px; height: 54px; margin-top: 7px; background: #5285a6; border-radius: 2px; display: flex; align-items: center; justify-content: center; }
    .tb-b { margin-top: 8px; }
    .mag { margin-top: 19px; }
    .logo { margin-top: auto; margin-bottom: 9px; }

    .outliner { flex: none; width: 393px; margin-right: 6px; display: flex; flex-direction: column; }
    .ol-tab { flex: none; align-self: flex-start; margin: 4px 0 0 2px; width: 102px; height: 27px; background: #444; color: #efefef; display: flex; align-items: center; justify-content: center; border-radius: 3px 3px 0 0; }
    .ol-body { flex: 1; background: #444; display: flex; flex-direction: column; min-height: 0; }
    .mbar { display: flex; gap: 25px; white-space: nowrap; }
    .ol-menu { height: 41px; box-sizing: border-box; padding: 0 0 3px 17px; align-items: center; }
    .ol-search { display: flex; align-items: center; height: 31px; margin-bottom: 4px; }
    .focus { margin-left: 13px; }
    .search { flex: none; width: 343px; height: 31px; margin-left: 11px; background: #2b2b2b; border-radius: 2px; color: #777; display: flex; align-items: center; justify-content: space-between; padding: 0 6px 0 5px; box-sizing: border-box; }
    .ol-list { flex: none; margin-left: 4px; width: 385px; height: 861px; background: #383838; position: relative; display: flex; }
    .rows { flex: none; width: 369px; height: 845px; padding-top: 1px; box-sizing: border-box; }
    .li { height: 30px; display: flex; align-items: center; padding-left: 53px; color: #6f6f6f; white-space: nowrap; font-size: 18.6px; }
    .li svg { margin-right: 5px; }
    .li.hi { color: #c8c8c8; }
    .ol-v { flex: none; width: 16px; height: 845px; display: flex; flex-direction: column; align-items: center; }
    .ol-v .up { margin-top: 5px; }
    .v-thumb { width: 16px; height: 805px; margin: 7px 0 6px; background: #5d5d5d; border-radius: 7px; }
    .ol-h { position: absolute; left: 0; right: 0; bottom: 0; height: 15px; display: flex; align-items: center; }
    .ol-h .le { margin-left: 5px; }
    .h-thumb { background: #5d5d5d; border-radius: 7px; height: 15px; }
    .ol-h .h-thumb { width: 329px; margin: 0 6px 0 7px; }
    .ol-foot { flex: 1; display: flex; align-items: center; justify-content: center; }
    .ol-foot .hgrip { width: 130px; }

    .vp-panel { flex: none; width: 1665px; height: 974px; margin: 5px 4px 0 0; box-sizing: border-box; border: 1px solid #808080; background: #444; display: flex; flex-direction: column; }
    .vp-menu { height: 33px; align-items: center; padding-left: 14px; }
    .vp-tools { height: 30px; box-sizing: border-box; padding-bottom: 2px; display: flex; align-items: center; }
    .vp { flex: 1; position: relative; background: #5c5c5c; overflow: hidden; }
    .vp svg.grid { position: absolute; inset: 0; width: 100%; height: 100%; }
    .navcube { position: absolute; left: 1525px; top: 40px; }
    .vp-name { position: absolute; left: 796px; top: 881px; color: #fff; font-size: 14px; font-weight: 600; }
    .gizmo { position: absolute; left: 12px; top: 835px; }

    .side { flex: none; width: 393px; background: #444; display: flex; flex-direction: column; margin-top: 2px; }
    .side-top { display: flex; justify-content: flex-end; gap: 12px; padding: 6px 11px 0 0; height: 28px; box-sizing: border-box; }
    .side-menu { padding: 14px 0 0 18px; height: 32px; box-sizing: border-box; }
    .msg { flex: none; margin-top: 294px; height: 64px; font-weight: 700; font-size: 18px; line-height: 25px; text-align: center; box-sizing: border-box; color: #bdbdbd; }
    .msg-in { margin-left: 51px; width: 290px; }
    .side-grip { margin-top: auto; height: 2px; width: 128px; margin-left: 131px; flex: none; }
    .layer { flex: none; margin: 9px 0 0 4px; width: 386px; height: 277px; background: #363636; display: flex; flex-direction: column; }
    .ly-tabs { display: flex; gap: 2px; height: 29px; padding: 2px 0 0 2px; box-sizing: border-box; flex: none; }
    .ly-tabs .tab { width: 66px; height: 27px; }
    .ly-body { flex: 1; background: #444; border: 1px solid #333; display: flex; flex-direction: column; min-height: 0; }
    .ly-menu { height: 36px; padding-left: 16px; align-items: center; }
    .ly-icons { flex: none; height: 37px; display: flex; align-items: center; }
    .ly-list { flex: none; height: 148px; margin: 0 4px; background: #2b2b2b; }
    .ly-h { flex: none; height: 18px; margin: 0 4px; background: #383838; display: flex; align-items: center; }
    .ly-h .le { margin-left: 4px; }
    .ly-h .h-thumb { width: 241px; height: 16px; margin-left: 6px; }
    .ly-h .ri { margin-left: auto; margin-right: 3px; }

    .vtabs { flex: none; width: 29px; margin-top: 4px; display: flex; flex-direction: column; gap: 2px; }
    .vtab { box-sizing: border-box; width: 27px; flex: none; background: #3a3a3a; border: 1px solid #2f2f2f; border-left: 0; border-radius: 0 3px 3px 0; color: #858585; display: flex; align-items: center; justify-content: center; writing-mode: vertical-rl; text-orientation: sideways; white-space: nowrap; }
    .vtab.on { background: #444; color: #efefef; border-color: #444; }

    .time { height: 58px; margin-bottom: 4px; }
    .ruler { flex: none; width: 2095px; height: 46px; box-sizing: border-box; margin-left: 8px; background: #2b2b2b; border-bottom: 5px solid #383838; display: flex; overflow: hidden; }
    .cur { flex: none; width: 15px; margin-left: 11px; margin-bottom: -5px; background: #555; color: #e8e8e8; display: flex; justify-content: center; padding-top: 17px; box-sizing: border-box; }
    .cell { flex: none; width: 69.16px; }
    .cur + .cell { margin-left: 37px; }
    .cell-l { height: 22px; padding-left: 3px; display: flex; align-items: center; color: #7f7f7f; white-space: nowrap; }
    .cell-t { width: 2px; height: 7px; margin-top: 11px; background: #7f7f7f; }
    .inp { box-sizing: border-box; height: 37px; display: flex; align-items: center; padding-left: 10px; background: #2b2b2b; border-radius: 3px; color: #d0d0d0; }
    .inp.sm { height: 23px; justify-content: center; padding: 0; }
    .range { height: 51px; margin-bottom: 4px; }
    .r-track { flex: none; display: flex; align-items: center; width: 1330px; height: 37px; margin-left: 9px; background: #3a3a3a; }
    .r-track .inp + .inp { margin-left: 12px; }
    .slider { flex: none; display: flex; align-items: center; width: 632px; height: 28px; margin-left: 16px; background: #666; border-radius: 4px; color: #d8d8d8; padding: 0 8px 0 6px; box-sizing: border-box; }
    .s-h { flex: none; width: 20px; height: 26px; background: #9a9a9a; border-radius: 4px; }
    .s-a { margin-left: 10px; }
    .s-b { margin-left: auto; margin-right: 8px; }

    .cmd { height: 42px; }
    .cmd-l { flex: none; width: 1090px; height: 42px; box-sizing: border-box; padding-top: 6px; display: flex; align-items: center; }
    .help { margin-left: 16px; }
    .cmd-t { margin-left: 9px; font-size: 16px; color: #dedede; white-space: nowrap; }
    .cmd-d { flex: none; width: 2px; height: 42px; margin: -6px 0 0 auto; background: #383838; }
    .cmd-g { margin-left: 5px; padding-top: 6px; }
    .mel { flex: none; margin-left: 21px; padding-top: 6px; color: #e4e4e4; }
    .box { flex: none; height: 35px; align-self: flex-end; background: #2b2b2b; border-radius: 3px 3px 0 0; }
    .b1 { width: 329px; margin-left: 19px; }
    .b2 { width: 991px; margin-left: 5px; }
    .b3 { flex: none; width: 2px; height: 14px; margin: 6px 0 0 5px; background: repeating-linear-gradient(#8a8a8a 0 2px, transparent 2px 6px); }
    .script { margin: 0 13px 0 10px; padding-top: 6px; }

    .wm { position: absolute; font-size: 50px; line-height: 1; white-space: nowrap; pointer-events: none; font-weight: 300; }
    .wm1 { left: 2035px; top: 32px; color: #3a3a3a; }
    .wm2 { left: 1155px; top: 640px; color: rgba(155, 50, 50, 0.55); }
    .wm3 { left: 288px; top: 1243px; color: rgba(38, 38, 38, 0.5); }
  `;

  render() {
    return html`
      ${this.renderMenu()} ${this.renderStatus()} ${this.renderShelf()}
      <div class="main">${this.renderToolbox()} ${this.renderOutliner()} ${this.renderViewport()} ${this.renderSide()}</div>
      ${this.renderTime()} ${this.renderRange()} ${this.renderCmd()}
      <div class="wm wm1">趣享小程序</div>
      <div class="wm wm2">趣享小程序</div>
      <div class="wm wm3">趣享小程序</div>
    `;
  }

  renderMenu() {
    return html`<div class="bar menu">
      <svg class="home" width="25" height="25" viewBox="0 0 25 25"><path d="M12.5 0L25 14H21V25H15V17H10V25H4V14H0L4 9.5V2H8V5Z" fill=${G} /></svg>
      <div class="menus">${MENUS.map((m) => html`<span>${m}</span>`)}</div>
      <div class="ws">
        <span class="ws-l">工作区:</span>
        ${dd(225, 29, "常规*", 30).c}
        <svg class="lock" width="14" height="24" viewBox="0 0 14 24"><path d="M2 11V5A5 5 0 0 1 12 5V11" fill="none" stroke=${G} stroke-width="2" /><rect x="0" y="10" width="14" height="14" fill=${G} /><circle cx="7" cy="16" r="2" fill=${K} /><rect x="6" y="17" width="2" height="4" fill=${K} /></svg>
      </div>
    </div>`;
  }

  renderStatus() {
    const login = {
      w: 167,
      c: html`<span class="login" style="width:167px">${mini.person.c}<span>登录</span>${arrow}</span>`,
    };
    const items: StripItem[] = [
      [grip, 4], [dd(148, 32, "建模", 30), 20], [handle, 181], ["new", 208], ["open", 237], ["save", 274], ["undo", 309], ["redo", 344],
      [collapse, 385], [handle, 416], ["m1", 439], ["m2", 469], ["m3", 510], [collapse, 551], [handle, 582],
      ["s1", 605], ["s2", 640], ["s3", 675], ["s4", 709], ["s5", 745], ["s6", 779], [tinyTri, 817], [fieldBox(148, "无激活曲面"), 836], [handle, 1000], [tinyTri, 1025],
      [fieldBox(149, "对称: 禁用"), 1045], [collapse, 1206], [handle, 1238],
      ["c1", 1260], ["c2", 1294], ["c3", 1329], ["c4", 1365], ["ring", 1401], ["c5", 1435], ["rs", 1471], ["pause", 1510], [collapse, 1547], [handle, 1579],
      [login, 1596], ["r1", 2387], ["r2", 2422], ["r3", 2458], ["r4", 2494], ["r5", 2523],
    ];
    return html`<div class="bar status">${strip(0, items)}</div>`;
  }

  renderShelf() {
    return html`<div class="shelf">
      <span class="grip tall"></span>
      <div class="shelf-side">
        <svg width="12" height="6" viewBox="0 0 12 6"><path d="M0 0H12V2H0ZM0 4H12V6H0Z" fill=${G} /></svg>
        <svg width="16" height="16" viewBox="0 0 16 16"><circle cx="8" cy="8" r="5" fill="none" stroke=${G} stroke-width="2.5" /><circle cx="8" cy="8" r="7" fill="none" stroke=${G} stroke-width="2" stroke-dasharray="2 3.5" /></svg>
      </div>
      <div class="shelf-main">
        <div class="tabs">
          ${TABS.map(([t, w], i) => html`<div class="tab ${i == 1 ? "on" : ""}" style="width:${w}px">${t}</div>`)}
        </div>
        <div class="icons">
          ${SHELF.map((n) => {
            if (n == "|") return html`<span class="sep"></span>`;
            const bracket = n[0] == "[";
            const name = bracket ? n.slice(1) : n;
            return html`<span class="slot">${bracket
              ? html`<svg class="brk" width="53" height="52" viewBox="0 0 53 52"><path d="M8 .5H.5V51.5H8M45 .5H52.5V51.5H45" fill="none" stroke="#18e018" /></svg>`
              : ""}<svg width="38" height="38" viewBox="0 0 38 38">${shelf[name]}</svg></span>`;
          })}
          <div class="scroller"><i class="up"></i><i class="knob"></i><i class="dn"></i></div>
        </div>
      </div>
    </div>`;
  }

  renderToolbox() {
    const t = (c: unknown, on = false) =>
      html`<div class="tool ${on ? "on" : ""}"><svg width="44" height="44" viewBox="0 0 44 44">${c}</svg></div>`;
    const plus = (x: number, y: number, w: number, h: number) =>
      svg`<rect x=${x + 0.5} y=${y + 0.5} width=${w - 1} height=${h - 1} fill="none" stroke=${G}/>${ln(`M${x + w / 2} ${y + h / 2 - 5.5}V${y + h / 2 + 5.5}M${x + w / 2 - 5.5} ${y + h / 2}H${x + w / 2 + 5.5}`, G)}`;
    const solid = (x: number, y: number, w: number, h: number) =>
      svg`${rc(x, y, w, h)}${fl(`M${x + w / 2} ${y + h / 2 - 3.5}L${x + w / 2 + 6} ${y + h / 2}L${x + w / 2} ${y + h / 2 + 3.5}L${x + w / 2 - 6} ${y + h / 2}Z`, K)}`;
    return html`<div class="toolbox">
      <div class="tb-grip"></div>
      ${t(tools.select, true)} ${t(tools.lasso)} ${t(tools.paint)} ${t(tools.move)} ${t(tools.rotate)} ${t(tools.scale)}
      <div class="tb-line tb-a"></div>
      <svg class="lay" width="42" height="43" viewBox="0 0 42 43">${rc(0, 0, 42, 43)}${ln("M4 4H38V39H4Z", K, 1)}${fl("M21 11L27 15L21 19L15 15Z", K)}${fl("M13 17L19 21L13 25L7 21Z", K)}${fl("M29 17L35 21L29 25L23 21Z", K)}${fl("M21 23L27 27L21 31L15 27Z", K)}</svg>
      <svg class="lay2" width="42" height="43" viewBox="0 0 42 43">${plus(0, 0, 20, 20)}${solid(22, 0, 20, 20)}${plus(0, 22, 20, 21)}${plus(22, 22, 20, 21)}</svg>
      <svg class="lay3" width="42" height="43" viewBox="0 0 42 43">${plus(0, 0, 20, 43)}${solid(22, 0, 20, 43)}</svg>
      <div class="lay-on">
        <svg width="46" height="44" viewBox="0 0 46 44"><rect x=".5" y=".5" width="45" height="43" fill="none" stroke=${G} /><rect x="2.5" y="2.5" width="41" height="39" fill="none" stroke="#333" />${ln("M12 8V36M12 16H20M12 25H20M12 34H20", G, 1)}${rc(9, 5, 6, 6)}${ln("M15 8H29", G, 1.5)}${[14, 23, 32].map((y, i) => svg`${rc(18, y, 6, 6)}${ln(`M24 ${y + 3}H${[38, 33, 36][i]}`, G, 1.5)}`)}</svg>
      </div>
      <div class="tb-line tb-b"></div>
      <svg class="mag" width="34" height="34" viewBox="0 0 34 34"><circle cx="13" cy="13" r="11.5" fill="none" stroke=${G} stroke-width="2.5" /><path d="M21 21L32 32" stroke=${G} stroke-width="4" stroke-linecap="round" /></svg>
      <svg class="logo" width="45" height="48" viewBox="0 0 45 48">
        <path d="M0 6L8 0V32L0 36Z" fill="#7fc7e3" /><rect x="4" y="30" width="41" height="18" rx="2" fill="#2f6f90" /><path d="M8 2Q8 0 10 0H39Q41 0 41 2V32H8Z" fill="#3ba4d2" />
        <text x="25" y="26" text-anchor="middle" font-size="27" font-weight="bold" font-family="Liberation Sans" fill="#fff">M</text>
        <text x="25" y="45" text-anchor="middle" font-size="10" font-weight="bold" font-family="Liberation Sans" fill="#e8f3f8">AYA</text>
      </svg>
    </div>`;
  }

  renderOutliner() {
    const camIcon = svg`${rc(0, 0, 15, 12)}${fl("M22 0V12L16 6Z")}`;
    const setIcon = svg`<circle cx="11" cy="11" r="10.5" fill="none" stroke=${G} stroke-width="1.2"/>${fl("M11 4H19V17H11V14A4 4 0 0 0 11 8Z", T)}<circle cx="8" cy="14" r="4" fill=${G}/>`;
    return html`<div class="outliner">
      <div class="ol-tab">大纲视图</div>
      <div class="ol-body">
        <div class="mbar ol-menu"><span>展示</span><span>显示</span><span>帮助</span></div>
        <div class="ol-search">
          <svg class="focus" width="21" height="21" viewBox="0 0 21 21">${ln("M5 1H1V5M16 1H20V5M5 20H1V16M16 20H20V16", "#666", 2)}</svg>
          <div class="search"><span>搜索...</span>${arrow}</div>
        </div>
        <div class="ol-list">
          <div class="rows">
            ${LIST.map(([n, dim]) => html`<div class="li ${dim ? "" : "hi"}"><svg width="22" height=${dim ? 12 : 22} viewBox="0 0 22 ${dim ? 12 : 22}">${dim ? camIcon : setIcon}</svg>${n}</div>`)}
          </div>
          <div class="ol-v"><i class="up"></i><div class="v-thumb"></div><i class="dn"></i></div>
          <div class="ol-h"><i class="le"></i><div class="h-thumb"></div><i class="ri"></i></div>
        </div>
        <div class="ol-foot"><div class="hgrip"></div></div>
      </div>
    </div>`;
  }

  renderViewport() {
    const items: StripItem[] = [
      [handleS, 475], ["pA", 487], ["pB", 517], ["pC", 546], ["pD", 575], ["pE", 603], [handleS, 634], ["cam", 648], ["lockcam", 677], ["gearcam", 705], ["mark", 739], ["plane2", 766], ["focus", 793], ["pen", 819],
      [handleS, 852], ["grid1", 863], ["film", 895], ["res", 925], ["dk", 950], ["safe", 983], ["gate", 1012], ["txt", 1041], [handleS, 1071],
      ["wire", 1086], ["shaded", 1110], ["half", 1143], ["hexa", 1173], ["checkb", 1202], ["bulb", 1229], ["shad", 1259], [handleS, 1289], ["ao", 1302], ["ghost", 1334], ["circT", 1362], ["dk2", 1387], [handleS, 1419],
      ["sel", 1435], [handleS, 1464], ["xr1", 1478], ["xr2", 1507], ["xr3", 1535], [handleS, 1565], ["apert", 1582], [inp(57, "0.00", "inp sm"), 1607], ["cont", 1674], [inp(58, "1.00", "inp sm"), 1698], ["on", 1759],
      [dd(314, 27, "ACES 1.0 SDR-video (sRGB)", 29), 1790],
    ];
    return html`<div class="vp-panel">
      <div class="mbar vp-menu"><span>视图</span><span>着色</span><span>照明</span><span>显示</span><span>渲染器</span><span>面板</span></div>
      <div class="vp-tools">${strip(470, items)}</div>
      <div class="vp">
        <svg class="grid" viewBox="470 259 1663 909" shape-rendering="crispEdges">
          ${GRID.map((g) => svg`<line x1=${g.p[0]} y1=${g.p[1]} x2=${g.p[2]} y2=${g.p[3]} stroke=${g.axis ? "#424242" : "#474747"} stroke-width=${g.axis ? 2 : 1}/>`)}
        </svg>
        <svg class="navcube" width="100" height="105" viewBox="0 0 100 105">
          <path d="M49 1L98 16L49 39L1 16Z" fill="#8f8f8f" stroke="#6a6a6a" stroke-width="3" stroke-linejoin="round" />
          <path d="M1 16L49 39V103L6 69Z" fill="#a8a8a8" stroke="#6a6a6a" stroke-width="3" stroke-linejoin="round" />
          <path d="M98 16L49 39V103L94 69Z" fill="#9f9f9f" stroke="#6a6a6a" stroke-width="3" stroke-linejoin="round" />
          <text transform="translate(49 25) scale(1.1 .5) rotate(-18)" text-anchor="middle" font-size="24" fill="#6e6e6e">上</text>
          <text transform="translate(26 62) skewY(24)" text-anchor="middle" font-size="24" fill="#6a6a6a">前</text>
          <text transform="translate(73 64) skewY(-24)" text-anchor="middle" font-size="24" fill="#6a6a6a">右</text>
        </svg>
        <svg class="gizmo" width="46" height="45" viewBox="0 0 46 45">
          <path d="M26 17V34" stroke="#10e010" /><path d="M26 34L16 43" stroke="#2030ff" /><path d="M26 34L36 43" stroke="#ff2020" />
          <text x="26" y="10" text-anchor="middle" font-size="12" font-family="Liberation Sans" fill="#10e010">y</text>
          <text x="9" y="40" text-anchor="middle" font-size="12" font-weight="bold" font-family="Liberation Sans" fill="#2030ff">z</text>
          <text x="43" y="39" text-anchor="middle" font-size="12" font-family="Liberation Sans" fill="#ff2020">x</text>
        </svg>
        <div class="vp-name">persp</div>
      </div>
    </div>`;
  }

  renderSide() {
    const layerIcons: StripItem[] = [["kUp", 2380], ["kDn", 2417], ["kAdd", 2457], ["kDot", 2493]];
    return html`<div class="side">
      <div class="side-top">${mini.axes.c}${mini.spin.c}${mini.arrow2.c}</div>
      <div class="mbar side-menu"><span>通道</span><span>编辑</span><span>对象</span><span>显示</span></div>
      <div class="msg"><div class="msg-in">选择场景中的对象以查看、编辑和设置通道(属性)上的关键帧</div></div>
      <div class="hgrip side-grip"></div>
      <div class="layer">
        <div class="ly-tabs"><div class="tab on">显示</div><div class="tab">动画</div></div>
        <div class="ly-body">
          <div class="mbar ly-menu"><span>层</span><span>选项</span><span>帮助</span></div>
          <div class="ly-icons">${strip(2143, layerIcons)}</div>
          <div class="ly-list"></div>
          <div class="ly-h"><i class="le"></i><div class="h-thumb"></div><i class="ri"></i></div>
        </div>
      </div>
    </div>
    <div class="vtabs">
      <div class="vtab on" style="height:164px">通道盒/层编辑器</div>
      <div class="vtab" style="height:121px">属性编辑器</div>
      <div class="vtab" style="height:119px">建模工具包</div>
    </div>`;
  }

  renderTime() {
    const items: StripItem[] = [
      [inp(134, "1"), 2126], ["pStart", 2276], ["pPrev", 2315], ["pKeyB", 2348], ["pBack", 2382], ["pPlay", 2420], ["pKeyF", 2453], ["pNext", 2488], ["pEnd", 2521],
    ];
    return html`<div class="bar time">
      <span class="it" style="margin-left:4px">${grip.c}</span>
      <div class="ruler">
        <div class="cur">1</div>
        ${TICKS.map((n) => html`<div class="cell"><div class="cell-l">${n}</div><div class="cell-t"></div></div>`)}
      </div>
      ${strip(2114, items)}
    </div>`;
  }

  renderRange() {
    const items: StripItem[] = [
      [inp(134, "120"), 1361], [inp(134, "200"), 1507], [handle, 1645], ["bookmark", 1676], [handle, 1714], [tinyTri, 1742], [fieldBox(152, "无角色集"), 1767], [tinyTri, 1940], [fieldBox(153, "无动画层"), 1964],
      [handle, 2131], [dd(142, 29, "24 fps", 30), 2153], ["loopI", 2314], ["filmOn", 2355], [handle, 2404], ["speak", 2427], ["cache", 2472], ["run", 2514],
    ];
    return html`<div class="bar range">
      <span class="it" style="margin-left:4px">${grip.c}</span>
      <div class="r-track">
        <span class="inp" style="width:134px">1</span>
        <span class="inp" style="width:134px">1</span>
        <div class="slider"><i class="s-h"></i><span class="s-a">1</span><span class="s-b">120</span><i class="s-h"></i></div>
      </div>
      ${strip(1350, items)}
    </div>`;
  }

  renderCmd() {
    return html`<div class="bar cmd">
      <div class="cmd-l">
        <span class="it" style="margin-left:4px">${grip.c}</span>
        <svg class="help" width="23" height="24" viewBox="0 0 23 24"><ellipse cx="11.5" cy="12" rx="11.5" ry="12" fill="#8cb63c" /><text x="11.5" y="18" text-anchor="middle" font-size="17" font-weight="bold" font-family="Liberation Sans" fill="#2f3a1c">?</text></svg>
        <span class="cmd-t">选择工具: 选择一个对象</span>
        <span class="cmd-d"></span>
      </div>
      <span class="it cmd-g">${gripS.c}</span>
      <span class="mel">MEL</span>
      <div class="box b1"></div>
      <i class="b3"></i>
      <div class="box b2"></div>
      <svg class="script" width="26" height="28" viewBox="0 0 26 28">${rc(0, 0, 26, 5)}${rc(0, 6, 26, 22)}${ln("M11 10Q8 10 8 13V15L6 17L8 19V22Q8 25 11 25M15 10Q18 10 18 13V15L20 17L18 19V22Q18 25 15 25", K, 1.5)}</svg>
    </div>`;
  }
}
